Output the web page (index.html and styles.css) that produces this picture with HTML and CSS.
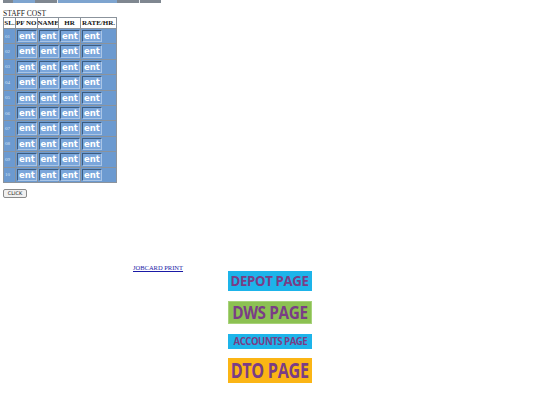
FILE: index.html
```html
<!DOCTYPE html>
<html>
<head>
<meta charset="utf-8">
<link rel="stylesheet" href="styles.css">
</head>
<body>
<div class="strip">
  <span class="g" style="width:10px"></span><span class="b" style="width:22px"></span><span class="g" style="width:22px"></span><span class="w"></span><span class="b" style="width:59px"></span><span class="g" style="width:22px"></span><span class="w"></span><span class="g" style="width:21px"></span>
</div>
<div class="caption">STAFF COST</div>
<table class="staff">
  <tr class="head"><th class="slh">SL.</th><th>PF NO</th><th>NAME</th><th class="hr">HR</th><th class="rate">RATE/HR.</th></tr>
  <tr><td class="sl">01</td><td><span class="inp">ent</span></td><td><span class="inp">ent</span></td><td><span class="inp">ent</span></td><td><span class="inp">ent</span></td></tr>
  <tr><td class="sl">02</td><td><span class="inp">ent</span></td><td><span class="inp">ent</span></td><td><span class="inp">ent</span></td><td><span class="inp">ent</span></td></tr>
  <tr><td class="sl">03</td><td><span class="inp">ent</span></td><td><span class="inp">ent</span></td><td><span class="inp">ent</span></td><td><span class="inp">ent</span></td></tr>
  <tr><td class="sl">04</td><td><span class="inp">ent</span></td><td><span class="inp">ent</span></td><td><span class="inp">ent</span></td><td><span class="inp">ent</span></td></tr>
  <tr><td class="sl">05</td><td><span class="inp">ent</span></td><td><span class="inp">ent</span></td><td><span class="inp">ent</span></td><td><span class="inp">ent</span></td></tr>
  <tr><td class="sl">06</td><td><span class="inp">ent</span></td><td><span class="inp">ent</span></td><td><span class="inp">ent</span></td><td><span class="inp">ent</span></td></tr>
  <tr><td class="sl">07</td><td><span class="inp">ent</span></td><td><span class="inp">ent</span></td><td><span class="inp">ent</span></td><td><span class="inp">ent</span></td></tr>
  <tr><td class="sl">08</td><td><span class="inp">ent</span></td><td><span class="inp">ent</span></td><td><span class="inp">ent</span></td><td><span class="inp">ent</span></td></tr>
  <tr><td class="sl">09</td><td><span class="inp">ent</span></td><td><span class="inp">ent</span></td><td><span class="inp">ent</span></td><td><span class="inp">ent</span></td></tr>
  <tr><td class="sl">10</td><td><span class="inp">ent</span></td><td><span class="inp">ent</span></td><td><span class="inp">ent</span></td><td><span class="inp">ent</span></td></tr>
</table>
<div class="btnrow"><span class="click">CLICK</span></div>
<div class="linkrow"><a class="job" href="#">JOBCARD PRINT</a></div>
<div class="pages">
  <div class="pg depot"><span>DEPOT PAGE</span></div>
  <div class="pg dws"><span>DWS PAGE</span></div>
  <div class="pg accounts"><span>ACCOUNTS PAGE</span></div>
  <div class="pg dto"><span>DTO PAGE</span></div>
</div>
</body>
</html>
```
FILE: styles.css
```css
html, body { margin: 0; padding: 0; background: #fff; }
body { padding: 0 3px; font-family: "Liberation Serif", serif; }
.strip { display: flex; height: 3px; }
.strip span { display: block; height: 3px; }
.strip .g { background: #7f8790; }
.strip .b { background: #7ea4cf; }
.strip .w { width: 1px; background: #e8ecf0; }
.caption { margin-top: 7px; font-size: 7.5px; line-height: 7px; color: #222; }
.staff { border-collapse: separate; border-spacing: 1px; background: #8b939c; border: 0; margin-top: 0; table-layout: fixed; width: 114px; }
.staff th { background: #fff; font-size: 7px; font-weight: bold; padding: 0; height: 10px; line-height: 10px; border: 0; color: #111; white-space: nowrap; overflow: hidden; }
.staff th.slh { width: 11px; }
.staff th.hr { width: 21px; }
.staff th.rate { width: 35px; }
.staff td { background: #6c9ad0; padding: 1px 1px; height: 12.4px; vertical-align: middle; }
.staff td.sl { font-size: 5px; color: #d6e4f4; padding: 0 1px; }
.inp { display: block; width: 17px; height: 10.4px; border-top: 1px solid #3c5c80; border-left: 1px solid #3c5c80; border-right: 1px solid #a9c5e6; border-bottom: 1px solid #a9c5e6; background: #7aa6db; color: #fff; font-family: "DejaVu Sans", sans-serif; font-weight: bold; font-size: 8.5px; line-height: 10.4px; padding-left: 1px; overflow: hidden; white-space: nowrap; }
.btnrow { margin-top: 6px; display: flex; }
.click { display: block; box-sizing: border-box; width: 24px; height: 9px; border: 1px solid #8a8a8a; border-radius: 2px; background: #f0f0f0; font-family: "DejaVu Sans", sans-serif; font-size: 5px; line-height: 7px; text-align: center; color: #222; }
.linkrow { margin-top: 66px; padding-left: 130px; height: 7px; }
.job { font-size: 6.5px; line-height: 7px; color: #1a1aa6; display: block; }
.pages { display: flex; flex-direction: column; align-items: center; }
.pg { width: 84px; display: flex; align-items: center; justify-content: center; font-family: "Open Sans", sans-serif; font-weight: 700; color: #7a3d86; letter-spacing: -0.4px; white-space: nowrap; overflow: hidden; }
.pg span { display: block; }
.depot { height: 20px; background: #1db4ea; font-size: 13.8px; }
.depot span { transform: scaleX(0.96); }
.dws { height: 23px; margin-top: 10px; background: #8cc152; font-size: 17px; border: 1px solid #a7d27a; box-sizing: border-box; }
.dws span { transform: scaleX(0.9); }
.accounts { height: 15px; margin-top: 10px; background: #1db4ea; font-size: 10px; letter-spacing: -0.5px; }
.accounts span { transform: scaleX(0.96); }
.dto { height: 25px; margin-top: 9px; background: #fbb515; font-size: 21px; }
.dto span { transform: scaleX(0.77); }
```
